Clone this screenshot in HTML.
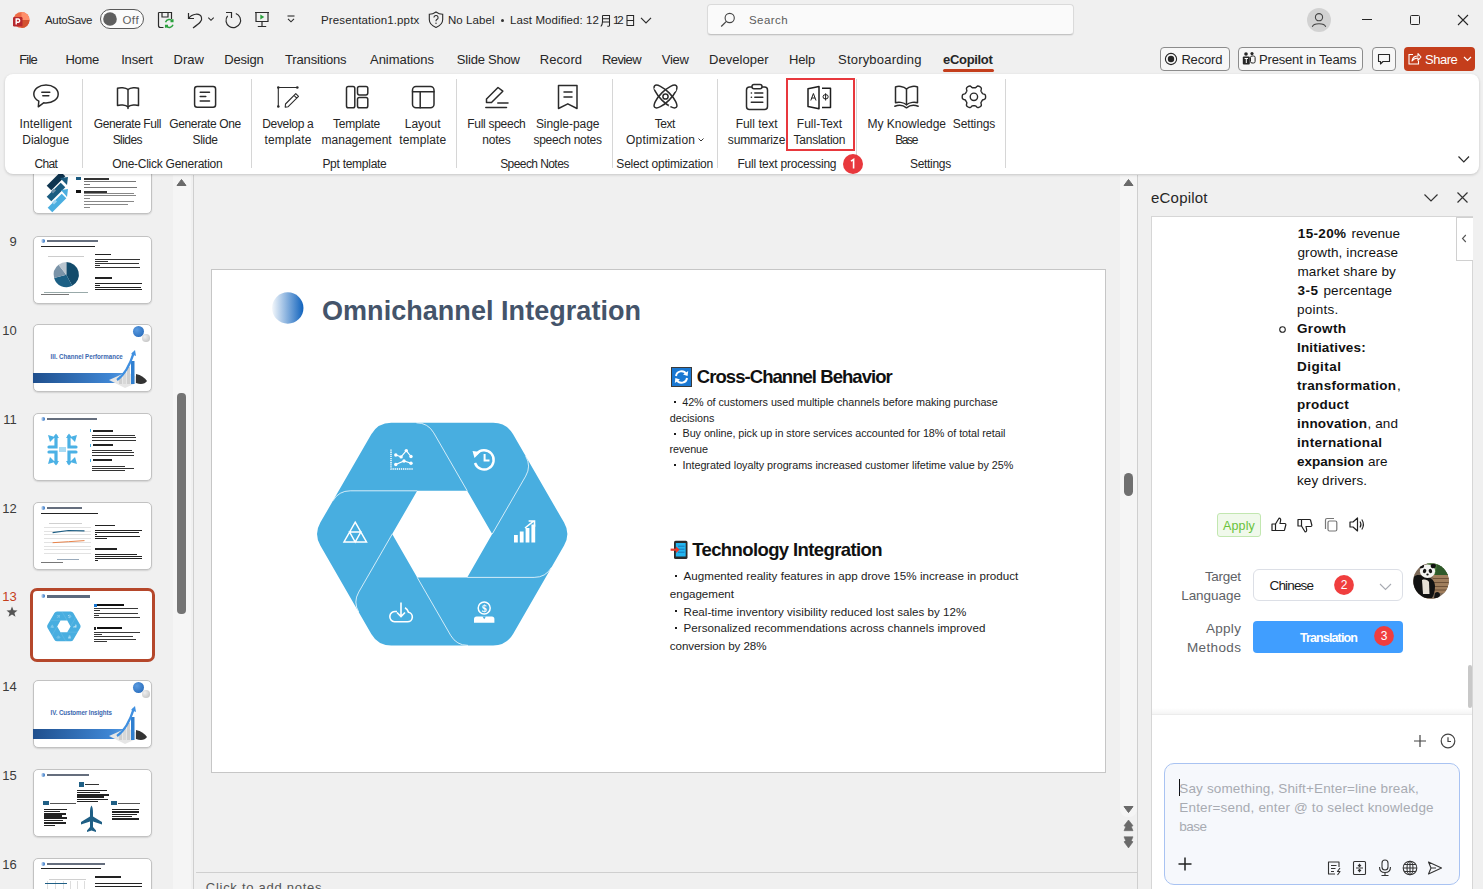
<!DOCTYPE html>
<html><head><meta charset="utf-8"><style>
html,body{margin:0;padding:0;}
body{width:1483px;height:889px;overflow:hidden;position:relative;background:#f0f0f0;font-family:"Liberation Sans",sans-serif;}
.t{position:absolute;white-space:pre;}
.r{position:absolute;}
.s{position:absolute;overflow:visible;}
</style></head><body>
<div class="r" style="left:173px;top:175px;width:18px;height:714px;background:#f5f5f5;"></div>
<div class="r" style="left:193px;top:175px;width:1px;height:714px;background:#cfcfcf;"></div>
<div class="r" style="left:1120px;top:175px;width:17px;height:642px;background:#f5f5f5;border-radius:0 0 8px 8px;"></div>
<div class="r" style="left:1137px;top:175px;width:1px;height:714px;background:#cfcfcf;"></div>
<div class="r" style="left:196px;top:872px;width:941px;height:1px;background:#cfcfcf;"></div>
<div class="r" style="left:211px;top:269px;width:895px;height:504px;background:#fff;border:1px solid #c6c6c6;box-sizing:border-box;"></div>
<div class="r" style="left:1151px;top:216px;width:322px;height:673px;background:#fff;border:1px solid #d6d6d6;box-sizing:border-box;border-bottom:none;"></div>
<div class="r" style="left:211px;top:269px;width:895px;height:504px;overflow:hidden;"><svg class="s" style="left:61px;top:23px;" width="32" height="32" viewBox="0 0 32 32"><defs><linearGradient id="gc" x1="0" x2="1" y1="0" y2="0"><stop offset="0" stop-color="#f3f7fb"/><stop offset="1" stop-color="#0f62bd"/></linearGradient></defs><circle cx="15.75" cy="16" r="15.7" fill="url(#gc)"/></svg>
<div class="t" style="left:111.00px;top:27.00px;font-size:27px;line-height:31.02px;color:#44546a;font-weight:bold;letter-spacing:0.044px;">Omnichannel Integration</div>
<svg class="s" style="left:0;top:0" width="895" height="504"><path d="M353.06 253.60 A23 23 0 0 1 353.06 276.60 L302.09 364.88 A23 23 0 0 1 282.17 376.38 L180.23 376.38 A23 23 0 0 1 160.31 364.88 L109.34 276.60 A23 23 0 0 1 109.34 253.60 L160.31 165.32 A23 23 0 0 1 180.23 153.82 L282.17 153.82 A23 23 0 0 1 302.09 165.32 Z M256.20 221.80 L206.20 221.80 L181.20 265.10 L206.20 308.40 L256.20 308.40 L281.20 265.10 Z" fill="#48aee0" fill-rule="evenodd"/><path d="M281.20 265.10 L314.68 207.12 A20 20 0 0 0 314.68 187.12 M256.20 308.40 L323.15 308.40 A20 20 0 0 0 340.47 298.40 M206.20 308.40 L239.68 366.38 A20 20 0 0 0 257.00 376.38 M181.20 265.10 L147.72 323.08 A20 20 0 0 0 147.72 343.08 M206.20 221.80 L139.25 221.80 A20 20 0 0 0 121.93 231.80 M256.20 221.80 L222.72 163.82 A20 20 0 0 0 205.40 153.82 " fill="none" stroke="#ffffff" stroke-opacity="0.85" stroke-width="0.9"/><g transform="translate(179.00,179.00)">
<path d="M1 1.5 V21 H22.7" fill="none" stroke="#ffffff" stroke-width="1.4" stroke-dasharray="1.3 0.8"/>
<polyline points="5.8,7 11.1,8.9 16.3,2.6 21,8.5" fill="none" stroke="#ffffff" stroke-width="1.2"/>
<polyline points="5.8,16.5 14,13 21,15.2" fill="none" stroke="#ffffff" stroke-width="1.2"/>
<circle cx="5.8" cy="7" r="1.7" fill="#ffffff"/><circle cx="11.1" cy="8.9" r="1.7" fill="#ffffff"/><circle cx="16.3" cy="2.6" r="1.7" fill="#ffffff"/><circle cx="21" cy="8.5" r="1.7" fill="#ffffff"/>
<circle cx="5.8" cy="16.5" r="1.7" fill="#ffffff"/><circle cx="14" cy="13" r="1.7" fill="#ffffff"/><circle cx="21" cy="15.2" r="1.7" fill="#ffffff"/>
</g><g transform="translate(261.00,179.00)">
<path d="M4.5 6 A9.6 9.6 0 1 1 3 15" fill="none" stroke="#ffffff" stroke-width="2.4"/>
<path d="M0.5 3 L8.5 4 L2.5 10 Z" fill="#ffffff"/>
<path d="M12.6 6 V12.5 H17.5" fill="none" stroke="#ffffff" stroke-width="2"/>
</g><g transform="translate(302.00,251.00)">
<rect x="1" y="15" width="3.8" height="7.5" fill="#ffffff"/>
<rect x="6.8" y="11.5" width="3.8" height="11" fill="#ffffff"/>
<rect x="12.6" y="8" width="3.8" height="14.5" fill="#ffffff"/>
<rect x="18.4" y="4.5" width="3.8" height="18" fill="#ffffff"/>
<path d="M12 8 L20.5 1.2 M15.6 1 H21.5 V6.8" fill="none" stroke="#ffffff" stroke-width="1.6"/>
</g><g transform="translate(262.00,332.00)">
<circle cx="11.2" cy="7" r="6" fill="none" stroke="#ffffff" stroke-width="1.5"/>
<text x="11.2" y="10.8" font-size="10" font-family="Liberation Serif" font-weight="bold" fill="#ffffff" text-anchor="middle">$</text>
<path d="M1 18 Q1 15.5 3.5 15.5 H18.9 Q21.4 15.5 21.4 18 V21.8 H1 Z" fill="#ffffff"/>
<path d="M9.5 15.5 L11.2 18.3 L12.9 15.5" fill="#48aee0"/>
</g><g transform="translate(178.00,332.00)">
<path d="M8 10.5 H6.5 A5 5 0 0 0 5.5 20.8 H18.5 A4.8 4.8 0 0 0 19.5 11.3 A7.5 7.5 0 0 0 16 6.8" fill="none" stroke="#ffffff" stroke-width="1.6"/>
<path d="M12 1.5 V15.5 M8 11.5 L12 15.5 L16 11.5" fill="none" stroke="#ffffff" stroke-width="1.6"/>
</g><g transform="translate(132.00,252.00)">
<path d="M12.2 1.2 L23.5 21 H1 Z M6.6 11.1 H17.8 L12.2 21 Z" fill="none" stroke="#ffffff" stroke-width="1.5" stroke-linejoin="miter"/>
</g></svg>
<svg class="s" style="left:460px;top:98px;" width="21" height="20" viewBox="0 0 21 20">
<rect x="0.5" y="0.5" width="20" height="19" fill="#1a78d2" stroke="#3a3a3a" stroke-width="1"/>
<path d="M5 9 A5.5 5.5 0 0 1 15.2 7" fill="none" stroke="#fff" stroke-width="2"/>
<path d="M16.5 3.5 V8.3 H11.8" fill="none" stroke="#fff" stroke-width="0"/>
<path d="M17.2 4 L16.6 9 L12 7.4 Z" fill="#fff"/>
<path d="M16 11 A5.5 5.5 0 0 1 5.8 13" fill="none" stroke="#fff" stroke-width="2"/>
<path d="M3.8 16 L4.4 11 L9 12.6 Z" fill="#fff"/>
</svg>
<div class="t" style="left:485.80px;top:97.00px;font-size:18.5px;line-height:21.26px;color:#111111;font-weight:bold;letter-spacing:-0.947px;">Cross-Channel Behavior</div>
<div class="r" style="left:463px;top:131.8px;width:2px;height:2px;background:#1c1c1c;"></div>
<div class="t" style="left:471.20px;top:127.00px;font-size:10.8px;line-height:12.41px;color:#1c1c1c;letter-spacing:-0.042px;">42% of customers used multiple channels before making purchase</div>
<div class="t" style="left:458.80px;top:143.00px;font-size:10.8px;line-height:12.41px;color:#1c1c1c;letter-spacing:-0.066px;">decisions</div>
<div class="r" style="left:463px;top:163.5px;width:2px;height:2px;background:#1c1c1c;"></div>
<div class="t" style="left:471.50px;top:158.00px;font-size:10.8px;line-height:12.41px;color:#1c1c1c;letter-spacing:-0.051px;">Buy online, pick up in store services accounted for 18% of total retail</div>
<div class="t" style="left:458.60px;top:174.00px;font-size:10.8px;line-height:12.41px;color:#1c1c1c;letter-spacing:-0.105px;">revenue</div>
<div class="r" style="left:463px;top:195.3px;width:2px;height:2px;background:#1c1c1c;"></div>
<div class="t" style="left:471.50px;top:190.00px;font-size:10.8px;line-height:12.41px;color:#1c1c1c;letter-spacing:-0.032px;">Integrated loyalty programs increased customer lifetime value by 25%</div>
<svg class="s" style="left:459px;top:271px;" width="19" height="20" viewBox="0 0 19 20">
<rect x="4" y="0.8" width="13.5" height="18.2" rx="1.6" fill="#2a2a2a"/>
<rect x="5.8" y="3" width="9.9" height="13.5" fill="#22b5f0"/>
<path d="M8 6.2 H14.5 M8 9.2 H14.5 M8 12.2 H14.5" stroke="#1565a8" stroke-width="0.8"/>
<path d="M0.6 9.7 H7" stroke="#e53b2c" stroke-width="2.2"/>
<path d="M6 6.5 L9.6 9.7 L6 12.9 Z" fill="#e53b2c"/>
</svg>
<div class="t" style="left:481.20px;top:270.00px;font-size:18.5px;line-height:21.26px;color:#111111;font-weight:bold;letter-spacing:-0.607px;">Technology Integration</div>
<div class="r" style="left:463.5px;top:306.0px;width:2.2px;height:2.2px;background:#1c1c1c;"></div>
<div class="t" style="left:472.50px;top:300.00px;font-size:11.6px;line-height:13.33px;color:#1c1c1c;letter-spacing:0.026px;">Augmented reality features in app drove 15% increase in product</div>
<div class="t" style="left:458.80px;top:318.00px;font-size:11.6px;line-height:13.33px;color:#1c1c1c;letter-spacing:-0.033px;">engagement</div>
<div class="r" style="left:463.5px;top:341.0px;width:2.2px;height:2.2px;background:#1c1c1c;"></div>
<div class="t" style="left:472.50px;top:336.00px;font-size:11.6px;line-height:13.33px;color:#1c1c1c;letter-spacing:0.023px;">Real-time inventory visibility reduced lost sales by 12%</div>
<div class="r" style="left:463.5px;top:358.0px;width:2.2px;height:2.2px;background:#1c1c1c;"></div>
<div class="t" style="left:472.50px;top:352.00px;font-size:11.6px;line-height:13.33px;color:#1c1c1c;letter-spacing:0.030px;">Personalized recommendations across channels improved</div>
<div class="t" style="left:458.80px;top:370.00px;font-size:11.6px;line-height:13.33px;color:#1c1c1c;letter-spacing:-0.082px;">conversion by 28%</div></div>
<div class="r" style="left:32.5px;top:146px;width:119px;height:68px;box-sizing:border-box;border:1px solid #c2c2c2;border-radius:5px;background:#fff;box-shadow:0 1px 1.5px rgba(0,0,0,0.12);"></div><div class="r" style="left:32.5px;top:146px;width:119px;height:68px;overflow:hidden;border-radius:5px;"><svg class="s" style="left:13.5px;top:20px;" width="26" height="46" viewBox="0 0 26 46">
<path d="M3 22 L17 8" stroke="#0f3550" stroke-width="6.5"/>
<path d="M3 33 L17 19" stroke="#1b5c80" stroke-width="6.5"/>
<path d="M14 12 L22 11 L21 19 Z" fill="#1b5c80"/>
<path d="M4 44 L18 30" stroke="#4aaee0" stroke-width="6.5"/>
<path d="M15 24 L22 23 L21 31 Z" fill="#4aaee0"/>
<path d="M5 25.5 L8 22.5 L10 24.5 L7 27.5 Z" fill="#6d8ea6"/>
<path d="M6 36.5 L9 33.5 L11 35.5 L8 38.5 Z" fill="#9fd3ef"/>
</svg><div class="r" style="left:43.5px;top:31px;width:5px;height:3px;background:#1a5a80;"></div><div class="r" style="left:51.5px;top:31.6px;width:25.0px;height:2px;background:#333;opacity:1;"></div><div class="r" style="left:51.5px;top:35.4px;width:52.0px;height:0.9px;background:#777;opacity:1;"></div><div class="r" style="left:51.5px;top:38.0px;width:6.0px;height:0.9px;background:#777;opacity:1;"></div><div class="r" style="left:51.5px;top:40.7px;width:53.0px;height:0.9px;background:#777;opacity:1;"></div><div class="r" style="left:43.5px;top:44px;width:5px;height:3.2px;background:#111;"></div><div class="r" style="left:51.5px;top:44.5px;width:23.0px;height:2px;background:#333;opacity:1;"></div><div class="r" style="left:51.5px;top:47.0px;width:50.0px;height:0.9px;background:#888;opacity:1;"></div><div class="r" style="left:51.5px;top:49.4px;width:52.0px;height:0.9px;background:#888;opacity:1;"></div><div class="r" style="left:51.5px;top:52.0px;width:6.0px;height:0.9px;background:#888;opacity:1;"></div><div class="r" style="left:51.5px;top:54.9px;width:50.0px;height:0.9px;background:#888;opacity:1;"></div><div class="r" style="left:51.5px;top:57.9px;width:44.0px;height:0.9px;background:#888;opacity:1;"></div><div class="r" style="left:51.5px;top:60.7px;width:6.0px;height:0.9px;background:#888;opacity:1;"></div></div>
<div class="t" style="left:9.57px;top:145.00px;font-size:13px;line-height:14.94px;color:#3b3b3b;">8</div>
<div class="r" style="left:32.5px;top:235.5px;width:119px;height:68px;box-sizing:border-box;border:1px solid #c2c2c2;border-radius:5px;background:#fff;box-shadow:0 1px 1.5px rgba(0,0,0,0.12);"></div><div class="r" style="left:32.5px;top:235.5px;width:119px;height:68px;overflow:hidden;border-radius:5px;"><div class="r" style="left:8.5px;top:3.5px;width:4.2px;height:4.2px;border-radius:50%;background:linear-gradient(90deg,#e6eef7,#1a66c0);"></div><div class="r" style="left:14.8px;top:4.2px;width:50.7px;height:2.6px;background:#4a5566;opacity:0.85;"></div><div class="r" style="left:8.0px;top:10.6px;width:54.5px;height:1px;background:#222;opacity:1;"></div><div class="r" style="left:15.5px;top:20.6px;width:35.5px;height:1px;background:#ccc;opacity:1;"></div><svg class="s" style="left:0;top:0" width="119" height="68"><path d="M33.30 38.70 L33.30 26.10 A12.6 12.6 0 0 1 39.22 49.83 Z" fill="#134b6b"/><path d="M33.30 38.70 L39.22 49.83 A12.6 12.6 0 0 1 21.13 41.96 Z" fill="#1b5f84"/><path d="M33.30 38.70 L21.13 41.96 A12.6 12.6 0 0 1 25.54 28.77 Z" fill="#7a93a8"/><path d="M33.30 38.70 L25.54 28.77 A12.6 12.6 0 0 1 33.30 26.10 Z" fill="#b9c5cf"/></svg><div class="r" style="left:11.5px;top:56.1px;width:44.0px;height:0.8px;background:#9aa;opacity:1;"></div><div class="r" style="left:8.0px;top:58.8px;width:28.3px;height:1.1px;background:#777;opacity:1;"></div><div class="r" style="left:62.5px;top:18.2px;width:15.5px;height:1.8px;background:#222;opacity:1;"></div><div class="r" style="left:62.8px;top:23.1px;width:45.2px;height:1px;background:#333;opacity:1;"></div><div class="r" style="left:62.8px;top:25.1px;width:12.7px;height:1px;background:#333;opacity:1;"></div><div class="r" style="left:62.8px;top:27.2px;width:43.7px;height:1px;background:#333;opacity:1;"></div><div class="r" style="left:62.8px;top:29.0px;width:4.7px;height:1px;background:#333;opacity:1;"></div><div class="r" style="left:62.8px;top:31.0px;width:45.2px;height:1px;background:#333;opacity:1;"></div><div class="r" style="left:62.5px;top:41.6px;width:17.0px;height:1.8px;background:#222;opacity:1;"></div><div class="r" style="left:62.8px;top:47.3px;width:46.7px;height:1.1px;background:#222;opacity:1;"></div><div class="r" style="left:62.8px;top:49.1px;width:4.7px;height:1.1px;background:#222;opacity:1;"></div><div class="r" style="left:62.8px;top:51.1px;width:45.7px;height:1.1px;background:#222;opacity:1;"></div><div class="r" style="left:62.8px;top:53.3px;width:46.7px;height:1.1px;background:#222;opacity:1;"></div></div>
<div class="t" style="left:9.57px;top:235.00px;font-size:13px;line-height:14.94px;color:#3b3b3b;">9</div>
<div class="r" style="left:32.5px;top:324.3px;width:119px;height:68px;box-sizing:border-box;border:1px solid #c2c2c2;border-radius:5px;background:#fff;box-shadow:0 1px 1.5px rgba(0,0,0,0.12);"></div><div class="r" style="left:32.5px;top:324.3px;width:119px;height:68px;overflow:hidden;border-radius:5px;"><div class="r" style="left:100.3px;top:1.7px;width:11px;height:11px;border-radius:50%;background:radial-gradient(circle at 35% 35%,#5a9be0,#1f63b5);"></div><div class="r" style="left:109.9px;top:9.7px;width:7.6px;height:7.6px;border-radius:50%;background:radial-gradient(circle at 35% 35%,#eee,#bbb);"></div><div class="t" style="left:18.10px;top:28.49px;font-size:6.2px;line-height:7.12px;color:#3a68b0;font-weight:bold;letter-spacing:-0.017px;transform:scaleY(1.25);transform-origin:0 80%;">III. Channel Performance</div><div class="r" style="left:0.0px;top:49.1px;width:97px;height:9.2px;background:linear-gradient(90deg,#1f4f8d,#3f86d4 80%,#5aa0e6);"></div><svg class="s" style="left:70.5px;top:25.69999999999999px;" width="45" height="42" viewBox="0 0 45 42">
<path d="M6 30 L22 38 L40 30 L24 22 Z" fill="#e6e6e6"/>
<rect x="16" y="26" width="3" height="8" fill="#cfcfcf"/><rect x="20" y="22" width="3" height="12" fill="#d8d8d8"/><rect x="24" y="17" width="3" height="17" fill="#cfcfcf"/>
<rect x="28" y="11" width="3.5" height="23" fill="#2f7fd0"/>
<path d="M14 30 C20 26 26 18 31 2" fill="none" stroke="#3f8fe0" stroke-width="2.3"/>
<path d="M28 4 L32 0 L33 6 Z" fill="#3f8fe0"/>
<path d="M33 24 C38 25 42 28 44 31 C42 34 38 35 33 33 Z" fill="#333"/>
</svg></div>
<div class="t" style="left:2.34px;top:324.00px;font-size:13px;line-height:14.94px;color:#3b3b3b;">10</div>
<div class="r" style="left:32.5px;top:413.3px;width:119px;height:68px;box-sizing:border-box;border:1px solid #c2c2c2;border-radius:5px;background:#fff;box-shadow:0 1px 1.5px rgba(0,0,0,0.12);"></div><div class="r" style="left:32.5px;top:413.3px;width:119px;height:68px;overflow:hidden;border-radius:5px;"><div class="r" style="left:8.5px;top:3.7px;width:4.2px;height:4.2px;border-radius:50%;background:linear-gradient(90deg,#e6eef7,#1a66c0);"></div><div class="r" style="left:14.8px;top:4.4px;width:49.3px;height:2.6px;background:#4a5566;opacity:0.85;"></div><svg class="s" style="left:13.5px;top:19.69999999999999px;" width="33" height="33" viewBox="0 0 33 33">
<g fill="none" stroke="#4bb1e5" stroke-width="3.2" stroke-linecap="round">
<path d="M10 3 V14 H3 M23 3 V14 H30 M10 30 V19 H3 M23 30 V19 H30"/>
</g>
<g fill="#4bb1e5">
<path d="M2 2 L9 4 L4 9 Z"/><path d="M31 2 L24 4 L29 9 Z"/><path d="M2 31 L9 29 L4 24 Z"/><path d="M31 31 L24 29 L29 24 Z"/>
<path d="M10 0.5 L13 5 H7 Z"/><path d="M23 0.5 L26 5 H20 Z"/><path d="M10 32.5 L13 28 H7 Z"/><path d="M23 32.5 L26 28 H20 Z"/>
</g>
<rect x="13" y="14" width="7" height="5" fill="#a9dbf3"/>
</svg><div class="r" style="left:57.5px;top:15.9px;width:0.8px;height:3px;background:#4bb1e5;opacity:1;"></div><div class="r" style="left:60.5px;top:16.5px;width:20.0px;height:1.8px;background:#222;opacity:1;"></div><div class="r" style="left:59.5px;top:21.5px;width:43.0px;height:1px;background:#333;opacity:1;"></div><div class="r" style="left:59.5px;top:23.6px;width:44.0px;height:1px;background:#333;opacity:1;"></div><div class="r" style="left:59.5px;top:26.6px;width:44.0px;height:1px;background:#333;opacity:1;"></div><div class="r" style="left:57.5px;top:30.6px;width:0.8px;height:3px;background:#4bb1e5;opacity:1;"></div><div class="r" style="left:60.5px;top:31.2px;width:20.0px;height:1.8px;background:#222;opacity:1;"></div><div class="r" style="left:59.5px;top:36.5px;width:40.0px;height:1px;background:#333;opacity:1;"></div><div class="r" style="left:59.5px;top:39.2px;width:42.0px;height:1px;background:#333;opacity:1;"></div><div class="r" style="left:59.5px;top:41.7px;width:42.0px;height:1px;background:#333;opacity:1;"></div><div class="r" style="left:57.5px;top:45.6px;width:0.8px;height:3px;background:#4bb1e5;opacity:1;"></div><div class="r" style="left:60.5px;top:46.2px;width:19.0px;height:1.8px;background:#222;opacity:1;"></div><div class="r" style="left:59.5px;top:52.5px;width:33.0px;height:1px;background:#333;opacity:1;"></div><div class="r" style="left:59.5px;top:54.5px;width:42.0px;height:1px;background:#333;opacity:1;"></div><div class="r" style="left:59.5px;top:56.6px;width:33.0px;height:1px;background:#333;opacity:1;"></div></div>
<div class="t" style="left:3.30px;top:413.00px;font-size:13px;line-height:14.94px;color:#3b3b3b;">11</div>
<div class="r" style="left:32.5px;top:502px;width:119px;height:68px;box-sizing:border-box;border:1px solid #c2c2c2;border-radius:5px;background:#fff;box-shadow:0 1px 1.5px rgba(0,0,0,0.12);"></div><div class="r" style="left:32.5px;top:502px;width:119px;height:68px;overflow:hidden;border-radius:5px;"><div class="r" style="left:8.5px;top:4.0px;width:4.2px;height:4.2px;border-radius:50%;background:linear-gradient(90deg,#e6eef7,#1a66c0);"></div><div class="r" style="left:14.8px;top:4.7px;width:35.0px;height:2.6px;background:#4a5566;opacity:0.85;"></div><div class="r" style="left:8.0px;top:10.7px;width:57.8px;height:1px;background:#222;opacity:1;"></div><div class="r" style="left:16.9px;top:20.8px;width:32.5px;height:1px;background:#d0d0d0;opacity:1;"></div><div class="r" style="left:11.8px;top:24.9px;width:46.4px;height:0.7px;background:#e2e2e2;opacity:1;"></div><div class="r" style="left:11.8px;top:28.8px;width:46.4px;height:0.7px;background:#e2e2e2;opacity:1;"></div><div class="r" style="left:11.8px;top:32.4px;width:46.4px;height:0.7px;background:#e2e2e2;opacity:1;"></div><div class="r" style="left:11.8px;top:36.1px;width:46.4px;height:0.7px;background:#e2e2e2;opacity:1;"></div><div class="r" style="left:11.8px;top:39.9px;width:46.4px;height:0.7px;background:#e2e2e2;opacity:1;"></div><div class="r" style="left:11.8px;top:43.6px;width:46.4px;height:0.7px;background:#e2e2e2;opacity:1;"></div><div class="r" style="left:11.8px;top:47.4px;width:46.4px;height:0.7px;background:#e2e2e2;opacity:1;"></div><div class="r" style="left:11.8px;top:51.0px;width:46.4px;height:0.7px;background:#e2e2e2;opacity:1;"></div><svg class="s" style="left:0;top:0" width="119" height="68"><polyline points="19.6,30.600000000000023 35.400000000000006,28.5 51.5,28.899999999999977" fill="none" stroke="#1f5f85" stroke-width="1.2"/><polyline points="19.6,40.700000000000045 35.400000000000006,39.700000000000045 51.5,38.60000000000002" fill="none" stroke="#e8834a" stroke-width="1"/></svg><div class="r" style="left:24.5px;top:56.7px;width:22.0px;height:0.8px;background:#9ab;opacity:1;"></div><div class="r" style="left:8.0px;top:59.5px;width:22.4px;height:1px;background:#777;opacity:1;"></div><div class="r" style="left:62.8px;top:22.5px;width:19.4px;height:1.8px;background:#222;opacity:1;"></div><div class="r" style="left:62.8px;top:27.7px;width:46.7px;height:1px;background:#222;opacity:1;"></div><div class="r" style="left:62.8px;top:29.5px;width:43.7px;height:1px;background:#222;opacity:1;"></div><div class="r" style="left:62.8px;top:31.5px;width:1.7px;height:1px;background:#222;opacity:1;"></div><div class="r" style="left:62.8px;top:33.6px;width:44.7px;height:1px;background:#222;opacity:1;"></div><div class="r" style="left:62.8px;top:35.8px;width:11.7px;height:1px;background:#222;opacity:1;"></div><div class="r" style="left:62.8px;top:45.9px;width:21.7px;height:1.8px;background:#222;opacity:1;"></div><div class="r" style="left:62.8px;top:51.7px;width:41.7px;height:1.1px;background:#222;opacity:1;"></div><div class="r" style="left:62.8px;top:53.8px;width:46.7px;height:1.1px;background:#222;opacity:1;"></div><div class="r" style="left:62.8px;top:55.7px;width:46.7px;height:1.1px;background:#222;opacity:1;"></div><div class="r" style="left:62.8px;top:57.7px;width:2.7px;height:1.1px;background:#222;opacity:1;"></div></div>
<div class="t" style="left:2.34px;top:502.00px;font-size:13px;line-height:14.94px;color:#3b3b3b;">12</div>
<div class="r" style="left:29.5px;top:588px;width:125px;height:74px;box-sizing:border-box;border:3px solid #b5472b;border-radius:7px;background:#fff;"></div><div class="r" style="left:32.5px;top:591px;width:119px;height:68px;overflow:hidden;border-radius:4px;"><div class="r" style="left:0;top:0;width:895px;height:504px;transform-origin:0 0;transform:scale(0.13352);"><svg class="s" style="left:0;top:0" width="895" height="504"><path d="M353.06 253.60 A23 23 0 0 1 353.06 276.60 L302.09 364.88 A23 23 0 0 1 282.17 376.38 L180.23 376.38 A23 23 0 0 1 160.31 364.88 L109.34 276.60 A23 23 0 0 1 109.34 253.60 L160.31 165.32 A23 23 0 0 1 180.23 153.82 L282.17 153.82 A23 23 0 0 1 302.09 165.32 Z M256.20 221.80 L206.20 221.80 L181.20 265.10 L206.20 308.40 L256.20 308.40 L281.20 265.10 Z" fill="#48aee0" fill-rule="evenodd"/><path d="M281.20 265.10 L314.68 207.12 A20 20 0 0 0 314.68 187.12 M256.20 308.40 L323.15 308.40 A20 20 0 0 0 340.47 298.40 M206.20 308.40 L239.68 366.38 A20 20 0 0 0 257.00 376.38 M181.20 265.10 L147.72 323.08 A20 20 0 0 0 147.72 343.08 M206.20 221.80 L139.25 221.80 A20 20 0 0 0 121.93 231.80 M256.20 221.80 L222.72 163.82 A20 20 0 0 0 205.40 153.82 " fill="none" stroke="#ffffff" stroke-opacity="0.85" stroke-width="0.9"/><g transform="translate(179.00,179.00)">
<path d="M1 1.5 V21 H22.7" fill="none" stroke="#ffffff" stroke-width="1.4" stroke-dasharray="1.3 0.8"/>
<polyline points="5.8,7 11.1,8.9 16.3,2.6 21,8.5" fill="none" stroke="#ffffff" stroke-width="1.2"/>
<polyline points="5.8,16.5 14,13 21,15.2" fill="none" stroke="#ffffff" stroke-width="1.2"/>
<circle cx="5.8" cy="7" r="1.7" fill="#ffffff"/><circle cx="11.1" cy="8.9" r="1.7" fill="#ffffff"/><circle cx="16.3" cy="2.6" r="1.7" fill="#ffffff"/><circle cx="21" cy="8.5" r="1.7" fill="#ffffff"/>
<circle cx="5.8" cy="16.5" r="1.7" fill="#ffffff"/><circle cx="14" cy="13" r="1.7" fill="#ffffff"/><circle cx="21" cy="15.2" r="1.7" fill="#ffffff"/>
</g><g transform="translate(261.00,179.00)">
<path d="M4.5 6 A9.6 9.6 0 1 1 3 15" fill="none" stroke="#ffffff" stroke-width="2.4"/>
<path d="M0.5 3 L8.5 4 L2.5 10 Z" fill="#ffffff"/>
<path d="M12.6 6 V12.5 H17.5" fill="none" stroke="#ffffff" stroke-width="2"/>
</g><g transform="translate(302.00,251.00)">
<rect x="1" y="15" width="3.8" height="7.5" fill="#ffffff"/>
<rect x="6.8" y="11.5" width="3.8" height="11" fill="#ffffff"/>
<rect x="12.6" y="8" width="3.8" height="14.5" fill="#ffffff"/>
<rect x="18.4" y="4.5" width="3.8" height="18" fill="#ffffff"/>
<path d="M12 8 L20.5 1.2 M15.6 1 H21.5 V6.8" fill="none" stroke="#ffffff" stroke-width="1.6"/>
</g><g transform="translate(262.00,332.00)">
<circle cx="11.2" cy="7" r="6" fill="none" stroke="#ffffff" stroke-width="1.5"/>
<text x="11.2" y="10.8" font-size="10" font-family="Liberation Serif" font-weight="bold" fill="#ffffff" text-anchor="middle">$</text>
<path d="M1 18 Q1 15.5 3.5 15.5 H18.9 Q21.4 15.5 21.4 18 V21.8 H1 Z" fill="#ffffff"/>
<path d="M9.5 15.5 L11.2 18.3 L12.9 15.5" fill="#48aee0"/>
</g><g transform="translate(178.00,332.00)">
<path d="M8 10.5 H6.5 A5 5 0 0 0 5.5 20.8 H18.5 A4.8 4.8 0 0 0 19.5 11.3 A7.5 7.5 0 0 0 16 6.8" fill="none" stroke="#ffffff" stroke-width="1.6"/>
<path d="M12 1.5 V15.5 M8 11.5 L12 15.5 L16 11.5" fill="none" stroke="#ffffff" stroke-width="1.6"/>
</g><g transform="translate(132.00,252.00)">
<path d="M12.2 1.2 L23.5 21 H1 Z M6.6 11.1 H17.8 L12.2 21 Z" fill="none" stroke="#ffffff" stroke-width="1.5" stroke-linejoin="miter"/>
</g></svg></div><div class="r" style="left:8.14px;top:3.07px;width:4.2px;height:4.2px;border-radius:50%;background:linear-gradient(90deg,#e6eef7,#1a66c0);"></div><div class="r" style="left:14.8px;top:4.4px;width:42.6px;height:2.4px;background:#4a5a70;opacity:0.9;"></div><div class="r" style="left:61.42px;top:13.08px;width:2.8px;height:2.6px;background:#1a78d2;"></div><div class="r" style="left:64.9px;top:13.3px;width:26.2px;height:1.9px;background:#111;opacity:1;"></div><div class="r" style="left:61.3px;top:17.3px;width:43.8px;height:0.9px;background:#222;opacity:0.9;"></div><div class="r" style="left:61.3px;top:19.4px;width:5.9px;height:0.9px;background:#222;opacity:0.9;"></div><div class="r" style="left:61.3px;top:21.5px;width:44.7px;height:0.9px;background:#222;opacity:0.9;"></div><div class="r" style="left:61.3px;top:23.7px;width:5.1px;height:0.9px;background:#222;opacity:0.9;"></div><div class="r" style="left:61.3px;top:25.8px;width:45.8px;height:0.9px;background:#222;opacity:0.9;"></div><div class="r" style="left:61.42px;top:36.18px;width:2.2px;height:2.6px;background:#222;"></div><div class="r" style="left:64.2px;top:36.4px;width:25.4px;height:1.9px;background:#111;opacity:1;"></div><div class="r" style="left:61.3px;top:40.6px;width:46.5px;height:0.9px;background:#222;opacity:0.9;"></div><div class="r" style="left:61.3px;top:43.0px;width:8.5px;height:0.9px;background:#222;opacity:0.9;"></div><div class="r" style="left:61.3px;top:45.3px;width:39.5px;height:0.9px;background:#222;opacity:0.9;"></div><div class="r" style="left:61.3px;top:47.6px;width:42.1px;height:0.9px;background:#222;opacity:0.9;"></div><div class="r" style="left:61.3px;top:50.0px;width:12.8px;height:0.9px;background:#222;opacity:0.9;"></div></div>
<div class="t" style="left:2.34px;top:590.00px;font-size:13px;line-height:14.94px;color:#c43e1c;">13</div>
<svg class="s" style="left:6px;top:606px;" width="12" height="11" viewBox="0 0 12 11"><path d="M6 0.5 L7.5 4.3 L11.5 4.5 L8.4 7 L9.5 10.8 L6 8.6 L2.5 10.8 L3.6 7 L0.5 4.5 L4.5 4.3 Z" fill="#555"/></svg>
<div class="r" style="left:32.5px;top:680.3px;width:119px;height:68px;box-sizing:border-box;border:1px solid #c2c2c2;border-radius:5px;background:#fff;box-shadow:0 1px 1.5px rgba(0,0,0,0.12);"></div><div class="r" style="left:32.5px;top:680.3px;width:119px;height:68px;overflow:hidden;border-radius:5px;"><div class="r" style="left:100.3px;top:1.7px;width:11px;height:11px;border-radius:50%;background:radial-gradient(circle at 35% 35%,#5a9be0,#1f63b5);"></div><div class="r" style="left:109.9px;top:9.7px;width:7.6px;height:7.6px;border-radius:50%;background:radial-gradient(circle at 35% 35%,#eee,#bbb);"></div><div class="t" style="left:18.10px;top:28.49px;font-size:6.2px;line-height:7.12px;color:#3a68b0;font-weight:bold;letter-spacing:-0.088px;transform:scaleY(1.25);transform-origin:0 80%;">IV. Customer Insights</div><div class="r" style="left:0.0px;top:49.1px;width:97px;height:9.2px;background:linear-gradient(90deg,#1f4f8d,#3f86d4 80%,#5aa0e6);"></div><svg class="s" style="left:70.5px;top:25.69999999999999px;" width="45" height="42" viewBox="0 0 45 42">
<path d="M6 30 L22 38 L40 30 L24 22 Z" fill="#e6e6e6"/>
<rect x="16" y="26" width="3" height="8" fill="#cfcfcf"/><rect x="20" y="22" width="3" height="12" fill="#d8d8d8"/><rect x="24" y="17" width="3" height="17" fill="#cfcfcf"/>
<rect x="28" y="11" width="3.5" height="23" fill="#2f7fd0"/>
<path d="M14 30 C20 26 26 18 31 2" fill="none" stroke="#3f8fe0" stroke-width="2.3"/>
<path d="M28 4 L32 0 L33 6 Z" fill="#3f8fe0"/>
<path d="M33 24 C38 25 42 28 44 31 C42 34 38 35 33 33 Z" fill="#333"/>
</svg></div>
<div class="t" style="left:2.34px;top:680.00px;font-size:13px;line-height:14.94px;color:#3b3b3b;">14</div>
<div class="r" style="left:32.5px;top:769.3px;width:119px;height:68px;box-sizing:border-box;border:1px solid #c2c2c2;border-radius:5px;background:#fff;box-shadow:0 1px 1.5px rgba(0,0,0,0.12);"></div><div class="r" style="left:32.5px;top:769.3px;width:119px;height:68px;overflow:hidden;border-radius:5px;"><div class="r" style="left:8.5px;top:3.7px;width:4.2px;height:4.2px;border-radius:50%;background:linear-gradient(90deg,#e6eef7,#1a66c0);"></div><div class="r" style="left:14.8px;top:4.4px;width:41.3px;height:2.6px;background:#4a5566;opacity:0.85;"></div><div class="r" style="left:46.3px;top:12.7px;width:5.6px;height:4.6px;background:#1f5f85;"></div><div class="r" style="left:52.5px;top:14.4px;width:14.0px;height:1.2px;background:#333;opacity:1;"></div><div class="r" style="left:44.9px;top:20.7px;width:29.6px;height:1.1px;background:#222;opacity:1;"></div><div class="r" style="left:44.9px;top:22.7px;width:22.6px;height:1.1px;background:#222;opacity:1;"></div><div class="r" style="left:44.9px;top:25.2px;width:32.1px;height:1.1px;background:#222;opacity:1;"></div><div class="r" style="left:44.9px;top:27.2px;width:26.6px;height:1.1px;background:#222;opacity:1;"></div><div class="r" style="left:44.9px;top:29.7px;width:30.6px;height:1.1px;background:#222;opacity:1;"></div><div class="r" style="left:44.9px;top:31.7px;width:20.6px;height:1.1px;background:#222;opacity:1;"></div><div class="r" style="left:10.3px;top:31.7px;width:6px;height:4.5px;background:#1f5f85;"></div><div class="r" style="left:17.5px;top:33.4px;width:26.0px;height:1px;background:#555;opacity:1;"></div><div class="r" style="left:78.5px;top:31.7px;width:6px;height:4.5px;background:#1f5f85;"></div><div class="r" style="left:85.5px;top:33.4px;width:22.0px;height:1px;background:#555;opacity:1;"></div><div class="r" style="left:11.5px;top:40.0px;width:23.0px;height:1.1px;background:#222;opacity:1;"></div><div class="r" style="left:11.5px;top:42.0px;width:16.0px;height:1.1px;background:#222;opacity:1;"></div><div class="r" style="left:11.5px;top:44.2px;width:22.0px;height:1.1px;background:#222;opacity:1;"></div><div class="r" style="left:11.5px;top:46.2px;width:18.0px;height:1.1px;background:#222;opacity:1;"></div><div class="r" style="left:11.5px;top:48.2px;width:23.0px;height:1.1px;background:#222;opacity:1;"></div><div class="r" style="left:11.5px;top:50.7px;width:19.0px;height:1.1px;background:#222;opacity:1;"></div><div class="r" style="left:11.5px;top:53.2px;width:22.0px;height:1.1px;background:#222;opacity:1;"></div><div class="r" style="left:11.5px;top:55.5px;width:11.0px;height:1.1px;background:#222;opacity:1;"></div><div class="r" style="left:79.8px;top:40.0px;width:26.7px;height:1.1px;background:#222;opacity:1;"></div><div class="r" style="left:79.8px;top:42.2px;width:26.7px;height:1.1px;background:#222;opacity:1;"></div><div class="r" style="left:79.8px;top:44.5px;width:24.7px;height:1.1px;background:#222;opacity:1;"></div><div class="r" style="left:79.8px;top:46.7px;width:19.7px;height:1.1px;background:#222;opacity:1;"></div><div class="r" style="left:79.8px;top:49.2px;width:26.7px;height:1.1px;background:#222;opacity:1;"></div><svg class="s" style="left:47.5px;top:35.700000000000045px;" width="23" height="28" viewBox="0 0 23 28">
<path d="M11.5 0.5 C12.8 2 13 5 13 8 V11.5 L22 17 V19.5 L13 16.5 V22 L16 25.5 V27 L11.5 25.5 L7 27 V25.5 L10 22 V16.5 L1 19.5 V17 L10 11.5 V8 C10 5 10.2 2 11.5 0.5 Z" fill="#1f5f85"/>
</svg></div>
<div class="t" style="left:2.34px;top:769.00px;font-size:13px;line-height:14.94px;color:#3b3b3b;">15</div>
<div class="r" style="left:32.5px;top:858.3px;width:119px;height:68px;box-sizing:border-box;border:1px solid #c2c2c2;border-radius:5px;background:#fff;box-shadow:0 1px 1.5px rgba(0,0,0,0.12);"></div><div class="r" style="left:32.5px;top:858.3px;width:119px;height:68px;overflow:hidden;border-radius:5px;"><div class="r" style="left:8.5px;top:3.7px;width:4.2px;height:4.2px;border-radius:50%;background:linear-gradient(90deg,#e6eef7,#1a66c0);"></div><div class="r" style="left:14.8px;top:4.4px;width:57.7px;height:2.6px;background:#4a5566;opacity:0.85;"></div><div class="r" style="left:8.0px;top:10.1px;width:60.5px;height:1px;background:#222;opacity:1;"></div><div class="r" style="left:16.5px;top:20.6px;width:37.0px;height:1px;background:#d0d0d0;opacity:1;"></div><div class="r" style="left:62.4px;top:18.1px;width:25.8px;height:1.8px;background:#222;opacity:1;"></div><div class="r" style="left:62.8px;top:24.4px;width:46.7px;height:1.1px;background:#222;opacity:1;"></div><div class="r" style="left:62.8px;top:27.4px;width:46.7px;height:1.1px;background:#222;opacity:1;"></div><div class="r" style="left:14.5px;top:22.700000000000045px;width:0.7px;height:10px;background:#ddd;"></div><div class="r" style="left:22.5px;top:22.700000000000045px;width:0.7px;height:10px;background:#ddd;"></div><div class="r" style="left:30.5px;top:22.700000000000045px;width:0.7px;height:10px;background:#ddd;"></div><div class="r" style="left:37.5px;top:22.700000000000045px;width:0.7px;height:10px;background:#ddd;"></div><div class="r" style="left:44.5px;top:22.700000000000045px;width:0.7px;height:10px;background:#ddd;"></div><div class="r" style="left:51.5px;top:22.700000000000045px;width:0.7px;height:10px;background:#ddd;"></div><div class="r" style="left:12.5px;top:25.2px;width:22.0px;height:1px;background:#1f5f85;opacity:1;"></div></div>
<div class="t" style="left:2.34px;top:858.00px;font-size:13px;line-height:14.94px;color:#3b3b3b;">16</div>
<svg class="s" style="left:176px;top:178px;" width="11" height="9" viewBox="0 0 11 9"><path d="M5.5 1.5 L10 7.5 H1 Z" fill="#6a6a6a" stroke="#6a6a6a" stroke-width="1" stroke-linejoin="round"/></svg>
<div class="r" style="left:177px;top:393px;width:8.5px;height:221px;background:#747474;border-radius:4px;"></div>
<div class="r" style="left:5px;top:74px;width:1474px;height:100px;background:#fff;border-radius:8px;box-shadow:0 1px 3px rgba(0,0,0,0.18);"></div>
<svg class="s" style="left:12px;top:11px;" width="18" height="18" viewBox="0 0 18 18">
<circle cx="9.5" cy="9" r="8" fill="#ed6c47"/>
<path d="M9.5 1 A8 8 0 0 1 17.5 9 L9.5 9 Z" fill="#ff8f6b"/>
<path d="M17.5 9 A8 8 0 0 1 9.5 17 L9.5 9 Z" fill="#d35230"/>
<rect x="1" y="6" width="9.5" height="9.5" rx="1.2" fill="#b7282e"/>
<path d="M4.2 13.6 V8 H6.4 A1.7 1.7 0 0 1 6.4 11.3 H4.2" fill="none" stroke="#fff" stroke-width="1.4"/>
</svg>
<div class="t" style="left:45.00px;top:14.00px;font-size:11.5px;line-height:13.21px;color:#262626;letter-spacing:-0.338px;">AutoSave</div>
<div class="r" style="left:100px;top:9px;width:44px;height:20px;box-sizing:border-box;border:1.3px solid #5a5a5a;border-radius:10px;background:#fbfbfb;"></div>
<svg class="s" style="left:100px;top:9px;" width="44" height="20" viewBox="0 0 44 20"><circle cx="10" cy="10" r="6.8" fill="#5f5f5f"/></svg>
<div class="t" style="left:122.40px;top:14.00px;font-size:11.5px;line-height:13.21px;color:#5f5f5f;letter-spacing:0.536px;">Off</div>
<svg class="s" style="left:157px;top:11px;" width="18" height="18" viewBox="0 0 18 18">
<path d="M1.5 1.5 H14.5 V8 M1.5 1.5 V14.5 Q1.5 16.5 3.5 16.5 H6.5" fill="none" stroke="#2b2b2b" stroke-width="1.2"/>
<path d="M5 1.5 V6 H11 V1.5" fill="none" stroke="#2b2b2b" stroke-width="1.2"/>
<path d="M8.5 11.2 A4 4 0 0 1 15.5 10.2 M15.8 8.3 V10.6 H13.5" fill="none" stroke="#2aa13d" stroke-width="1.5"/>
<path d="M16 13.8 A4 4 0 0 1 9 14.8 M8.7 16.7 V14.4 H11" fill="none" stroke="#2aa13d" stroke-width="1.5"/>
</svg>
<svg class="s" style="left:187px;top:11px;" width="30" height="18" viewBox="0 0 30 18">
<path d="M1.5 2 V7.5 H7" fill="none" stroke="#2b2b2b" stroke-width="1.2"/>
<path d="M1.8 7.3 C5 2.5 13 1.5 14.5 6.5 C15.5 9.5 13 12 6 17" fill="none" stroke="#2b2b2b" stroke-width="1.2"/>
<path d="M21.3 6.6 L24 9.3 L26.7 6.6" fill="none" stroke="#2b2b2b" stroke-width="1.1"/>
</svg>
<svg class="s" style="left:225px;top:11px;" width="18" height="18" viewBox="0 0 18 18">
<path d="M8 1.8 H1 M2.5 1 V8" fill="none" stroke="#2b2b2b" stroke-width="0"/>
<path d="M5 1.5 V7.5 M5 1.7 H0.5" fill="none" stroke="#2b2b2b" stroke-width="0"/>
<path d="M10.8 2.5 A7.3 7.3 0 1 1 2.6 4.8" fill="none" stroke="#2b2b2b" stroke-width="1.2"/>
<path d="M1 1.5 H6.5 V7" fill="none" stroke="#2b2b2b" stroke-width="1.2"/>
</svg>
<svg class="s" style="left:254px;top:11px;" width="17" height="18" viewBox="0 0 17 18">
<path d="M1 1.5 H15 M2 1.5 V10.5 H14 V1.5" fill="none" stroke="#2b2b2b" stroke-width="1.2"/>
<path d="M8 10.5 V15.5 M3.8 15.5 H12.2" fill="none" stroke="#2b2b2b" stroke-width="1.2"/>
<path d="M6.3 3.5 L10.3 6 L6.3 8.5 Z" fill="#2aa13d"/>
</svg>
<svg class="s" style="left:286px;top:14px;" width="10" height="10" viewBox="0 0 10 10"><path d="M1.5 2 H8.5" stroke="#2b2b2b" stroke-width="1.1"/><path d="M2 4.8 L5 7.8 L8 4.8" fill="none" stroke="#2b2b2b" stroke-width="1.1"/></svg>
<div class="t" style="left:321.00px;top:14.00px;font-size:11.5px;line-height:13.21px;color:#262626;letter-spacing:0.136px;">Presentation1.pptx</div>
<svg class="s" style="left:428px;top:11px;" width="16" height="18" viewBox="0 0 16 18">
<path d="M8 1 C5.5 2.8 3.5 3.3 1.3 3.3 V8.5 C1.3 12.5 4.5 15 8 16.5 C11.5 15 14.7 12.5 14.7 8.5 V3.3 C12.5 3.3 10.5 2.8 8 1 Z" fill="none" stroke="#2b2b2b" stroke-width="1.1"/>
<path d="M5.9 6.6 A2.1 2.1 0 1 1 8.6 8.6 C8.1 8.9 8 9.3 8 10.2" fill="none" stroke="#2b2b2b" stroke-width="1.1"/>
<circle cx="8" cy="12.3" r="0.7" fill="#2b2b2b"/>
</svg>
<div class="t" style="left:448.00px;top:14.00px;font-size:11.5px;line-height:13.21px;color:#262626;letter-spacing:0.067px;">No Label</div>
<div class="r" style="left:501px;top:19px;width:3px;height:3px;background:#333;border-radius:50%;"></div>
<div class="t" style="left:510.00px;top:14.00px;font-size:11.5px;line-height:13.21px;color:#262626;letter-spacing:0.089px;">Last Modified: 12</div>
<svg class="s" style="left:600px;top:14px;" width="12" height="13" viewBox="0 0 12 13">
<path d="M2.5 1.5 H9.5 V11.5 Q9.5 12.3 8.3 12.3 H7.3 M2.5 1.5 V7.5 Q2.5 10.8 0.8 12.5 M2.5 4.8 H9.5 M2.5 8 H9.5" fill="none" stroke="#262626" stroke-width="1.05"/>
</svg>
<div class="t" style="left:613.00px;top:14.00px;font-size:11.5px;line-height:13.21px;color:#262626;letter-spacing:-2.091px;">12</div>
<svg class="s" style="left:626px;top:14px;" width="9" height="13" viewBox="0 0 9 13">
<path d="M1 1.5 H7.6 V11.4 H1 Z M1 6.4 H7.6" fill="none" stroke="#262626" stroke-width="1.05"/>
</svg>
<svg class="s" style="left:639px;top:14px;" width="14" height="10" viewBox="0 0 14 10"><path d="M2 3.8 L7 8.8 L12 3.8" fill="none" stroke="#2b2b2b" stroke-width="1.2"/></svg>
<div class="r" style="left:707px;top:4px;width:367px;height:31px;box-sizing:border-box;border:1px solid #dadada;border-bottom-color:#c4c4c4;border-radius:4px;background:#fafafa;box-shadow:0 1px 1px rgba(0,0,0,0.06);"></div>
<svg class="s" style="left:720px;top:12px;" width="16" height="16" viewBox="0 0 16 16"><circle cx="9.7" cy="6" r="4.6" fill="none" stroke="#444" stroke-width="1.1"/><path d="M6.4 9.3 L1.2 14.5" stroke="#444" stroke-width="1.2"/></svg>
<div class="t" style="left:749.00px;top:14.00px;font-size:11.5px;line-height:13.21px;color:#5c5c5c;letter-spacing:0.433px;">Search</div>
<svg class="s" style="left:1307px;top:8px;" width="24" height="24" viewBox="0 0 24 24">
<circle cx="12" cy="12" r="12" fill="#d2d2d2"/>
<circle cx="12" cy="9.2" r="3.6" fill="none" stroke="#444" stroke-width="1.1"/>
<path d="M5.3 18.8 C6.5 14.8 17.5 14.8 18.7 18.8" fill="none" stroke="#444" stroke-width="1.1"/>
</svg>
<div class="r" style="left:1362px;top:19px;width:10px;height:1.2px;background:#262626;"></div>
<div class="r" style="left:1410px;top:15px;width:10px;height:10px;box-sizing:border-box;border:1.2px solid #262626;border-radius:1.5px;"></div>
<svg class="s" style="left:1457px;top:14px;" width="12" height="12" viewBox="0 0 12 12"><path d="M1 1 L11 11 M11 1 L1 11" stroke="#262626" stroke-width="1.1"/></svg>
<div class="t" style="left:19.20px;top:53.00px;font-size:13px;line-height:14.94px;color:#262626;letter-spacing:-0.782px;">File</div>
<div class="t" style="left:65.50px;top:53.00px;font-size:13px;line-height:14.94px;color:#262626;letter-spacing:-0.326px;">Home</div>
<div class="t" style="left:121.20px;top:53.00px;font-size:13px;line-height:14.94px;color:#262626;letter-spacing:-0.183px;">Insert</div>
<div class="t" style="left:173.60px;top:53.00px;font-size:13px;line-height:14.94px;color:#262626;letter-spacing:0.022px;">Draw</div>
<div class="t" style="left:224.20px;top:53.00px;font-size:13px;line-height:14.94px;color:#262626;letter-spacing:-0.193px;">Design</div>
<div class="t" style="left:285.00px;top:53.00px;font-size:13px;line-height:14.94px;color:#262626;letter-spacing:-0.149px;">Transitions</div>
<div class="t" style="left:370.00px;top:53.00px;font-size:13px;line-height:14.94px;color:#262626;letter-spacing:-0.034px;">Animations</div>
<div class="t" style="left:456.80px;top:53.00px;font-size:13px;line-height:14.94px;color:#262626;letter-spacing:-0.204px;">Slide Show</div>
<div class="t" style="left:539.80px;top:53.00px;font-size:13px;line-height:14.94px;color:#262626;letter-spacing:0.059px;">Record</div>
<div class="t" style="left:602.00px;top:53.00px;font-size:13px;line-height:14.94px;color:#262626;letter-spacing:-0.604px;">Review</div>
<div class="t" style="left:661.80px;top:53.00px;font-size:13px;line-height:14.94px;color:#262626;letter-spacing:-0.314px;">View</div>
<div class="t" style="left:709.00px;top:53.00px;font-size:13px;line-height:14.94px;color:#262626;letter-spacing:0.056px;">Developer</div>
<div class="t" style="left:789.00px;top:53.00px;font-size:13px;line-height:14.94px;color:#262626;letter-spacing:-0.178px;">Help</div>
<div class="t" style="left:838.00px;top:53.00px;font-size:13px;line-height:14.94px;color:#262626;letter-spacing:0.205px;">Storyboarding</div>
<div class="t" style="left:943.10px;top:53.00px;font-size:13px;line-height:14.94px;color:#262626;font-weight:bold;letter-spacing:-0.328px;">eCopilot</div>
<div class="r" style="left:943px;top:69px;width:51px;height:2.5px;background:#c43e1c;border-radius:1.5px;"></div>
<div class="r" style="left:1160px;top:47px;width:70px;height:24px;box-sizing:border-box;border:1px solid #8c8c8c;border-radius:4px;background:#f7f7f7;"></div>
<svg class="s" style="left:1164px;top:52px;" width="14" height="14" viewBox="0 0 14 14"><circle cx="7" cy="7" r="5.6" fill="none" stroke="#262626" stroke-width="1.1"/><circle cx="7" cy="7" r="3.2" fill="#262626"/></svg>
<div class="t" style="left:1181.40px;top:53.00px;font-size:13px;line-height:14.94px;color:#262626;letter-spacing:-0.161px;">Record</div>
<div class="r" style="left:1238px;top:47px;width:125px;height:24px;box-sizing:border-box;border:1px solid #8c8c8c;border-radius:4px;background:#f7f7f7;"></div>
<svg class="s" style="left:1242px;top:51px;" width="14" height="15" viewBox="0 0 14 15">
<circle cx="4" cy="3" r="1.8" fill="#262626"/><circle cx="10" cy="2.6" r="1.6" fill="#262626"/>
<rect x="0.8" y="5.5" width="7" height="8" rx="1" fill="#262626"/>
<rect x="8.5" y="5" width="4.6" height="7" rx="1.5" fill="none" stroke="#262626" stroke-width="1"/>
<path d="M2.6 7.5 H6 M4.3 7.5 V12" stroke="#fff" stroke-width="1"/>
</svg>
<div class="t" style="left:1259.00px;top:53.00px;font-size:13px;line-height:14.94px;color:#262626;letter-spacing:-0.173px;">Present in Teams</div>
<div class="r" style="left:1372px;top:47px;width:24px;height:24px;box-sizing:border-box;border:1px solid #8c8c8c;border-radius:4px;background:#f7f7f7;"></div>
<svg class="s" style="left:1377px;top:53px;" width="14" height="13" viewBox="0 0 14 13"><path d="M1.5 1.5 H12.5 V8.5 H6 L3.5 11 V8.5 H1.5 Z" fill="none" stroke="#262626" stroke-width="1.1" stroke-linejoin="round"/></svg>
<div class="r" style="left:1404px;top:47px;width:71px;height:24px;background:#c43e1c;border-radius:4px;"></div>
<svg class="s" style="left:1407px;top:51px;" width="15" height="15" viewBox="0 0 15 15">
<path d="M6 3.5 H2 V13 H11.5 V10" fill="none" stroke="#fff" stroke-width="1.1"/>
<path d="M5 10 C5.5 6.5 8 5 11 5 V2.5 L14 6 L11 9.5 V7 C8.8 7 6.5 8 5 10 Z" fill="none" stroke="#fff" stroke-width="1.1" stroke-linejoin="round"/>
</svg>
<div class="t" style="left:1425.00px;top:53.00px;font-size:13px;line-height:14.94px;color:#ffffff;letter-spacing:-0.497px;">Share</div>
<svg class="s" style="left:1463px;top:56px;" width="9" height="6" viewBox="0 0 9 6"><path d="M1 1 L4.5 4.5 L8 1" fill="none" stroke="#fff" stroke-width="1.2"/></svg>
<div class="t" style="left:19.55px;top:118.00px;font-size:12px;line-height:13.79px;color:#262626;letter-spacing:0.093px;">Intelligent</div>
<div class="t" style="left:22.30px;top:134.00px;font-size:12px;line-height:13.79px;color:#262626;letter-spacing:-0.081px;">Dialogue</div>
<div class="t" style="left:93.85px;top:118.00px;font-size:12px;line-height:13.79px;color:#262626;letter-spacing:-0.433px;">Generate Full</div>
<div class="t" style="left:112.70px;top:134.00px;font-size:12px;line-height:13.79px;color:#262626;letter-spacing:-0.577px;">Slides</div>
<div class="t" style="left:169.30px;top:118.00px;font-size:12px;line-height:13.79px;color:#262626;letter-spacing:-0.368px;">Generate One</div>
<div class="t" style="left:192.60px;top:134.00px;font-size:12px;line-height:13.79px;color:#262626;letter-spacing:-0.321px;">Slide</div>
<div class="t" style="left:262.20px;top:118.00px;font-size:12px;line-height:13.79px;color:#262626;letter-spacing:-0.304px;">Develop a</div>
<div class="t" style="left:264.55px;top:134.00px;font-size:12px;line-height:13.79px;color:#262626;letter-spacing:0.125px;">template</div>
<div class="t" style="left:332.90px;top:118.00px;font-size:12px;line-height:13.79px;color:#262626;letter-spacing:-0.184px;">Template</div>
<div class="t" style="left:321.55px;top:134.00px;font-size:12px;line-height:13.79px;color:#262626;letter-spacing:0.006px;">management</div>
<div class="t" style="left:404.85px;top:118.00px;font-size:12px;line-height:13.79px;color:#262626;letter-spacing:-0.066px;">Layout</div>
<div class="t" style="left:399.25px;top:134.00px;font-size:12px;line-height:13.79px;color:#262626;letter-spacing:0.125px;">template</div>
<div class="t" style="left:467.20px;top:118.00px;font-size:12px;line-height:13.79px;color:#262626;letter-spacing:-0.276px;">Full speech</div>
<div class="t" style="left:482.15px;top:134.00px;font-size:12px;line-height:13.79px;color:#262626;letter-spacing:-0.164px;">notes</div>
<div class="t" style="left:535.90px;top:118.00px;font-size:12px;line-height:13.79px;color:#262626;letter-spacing:-0.045px;">Single-page</div>
<div class="t" style="left:533.40px;top:134.00px;font-size:12px;line-height:13.79px;color:#262626;letter-spacing:-0.253px;">speech notes</div>
<div class="t" style="left:654.65px;top:118.00px;font-size:12px;line-height:13.79px;color:#262626;letter-spacing:-0.436px;">Text</div>
<div class="t" style="left:735.65px;top:118.00px;font-size:12px;line-height:13.79px;color:#262626;letter-spacing:-0.014px;">Full text</div>
<div class="t" style="left:727.85px;top:134.00px;font-size:12px;line-height:13.79px;color:#262626;letter-spacing:-0.147px;">summarize</div>
<div class="t" style="left:796.85px;top:118.00px;font-size:12px;line-height:13.79px;color:#262626;letter-spacing:-0.005px;">Full-Text</div>
<div class="t" style="left:793.60px;top:134.00px;font-size:12px;line-height:13.79px;color:#262626;letter-spacing:-0.248px;">Tanslation</div>
<div class="t" style="left:867.60px;top:118.00px;font-size:12px;line-height:13.79px;color:#262626;letter-spacing:-0.028px;">My Knowledge</div>
<div class="t" style="left:895.20px;top:134.00px;font-size:12px;line-height:13.79px;color:#262626;letter-spacing:-1.384px;">Base</div>
<div class="t" style="left:952.75px;top:118.00px;font-size:12px;line-height:13.79px;color:#262626;letter-spacing:-0.123px;">Settings</div>
<div class="t" style="left:626.00px;top:134.00px;font-size:12px;line-height:13.79px;color:#262626;letter-spacing:0.210px;">Optimization</div>
<svg class="s" style="left:697px;top:137px;" width="8" height="6" viewBox="0 0 8 6"><path d="M1.5 1.5 L4 4 L6.5 1.5" fill="none" stroke="#333" stroke-width="1"/></svg>
<div class="t" style="left:34.55px;top:158.00px;font-size:12px;line-height:13.79px;color:#262626;letter-spacing:-0.682px;">Chat</div>
<div class="t" style="left:112.15px;top:158.00px;font-size:12px;line-height:13.79px;color:#262626;letter-spacing:-0.257px;">One-Click Generation</div>
<div class="t" style="left:322.40px;top:158.00px;font-size:12px;line-height:13.79px;color:#262626;letter-spacing:-0.270px;">Ppt template</div>
<div class="t" style="left:500.15px;top:158.00px;font-size:12px;line-height:13.79px;color:#262626;letter-spacing:-0.571px;">Speech Notes</div>
<div class="t" style="left:616.35px;top:158.00px;font-size:12px;line-height:13.79px;color:#262626;letter-spacing:-0.212px;">Select optimization</div>
<div class="t" style="left:737.45px;top:158.00px;font-size:12px;line-height:13.79px;color:#262626;letter-spacing:-0.225px;">Full text processing</div>
<div class="t" style="left:910.05px;top:158.00px;font-size:12px;line-height:13.79px;color:#262626;letter-spacing:-0.323px;">Settings</div>
<div class="r" style="left:82px;top:79px;width:1px;height:89px;background:#d6d6d6;"></div>
<div class="r" style="left:251px;top:79px;width:1px;height:89px;background:#d6d6d6;"></div>
<div class="r" style="left:456px;top:79px;width:1px;height:89px;background:#d6d6d6;"></div>
<div class="r" style="left:612px;top:79px;width:1px;height:89px;background:#d6d6d6;"></div>
<div class="r" style="left:717px;top:79px;width:1px;height:89px;background:#d6d6d6;"></div>
<div class="r" style="left:856px;top:79px;width:1px;height:89px;background:#d6d6d6;"></div>
<div class="r" style="left:1005px;top:79px;width:1px;height:89px;background:#d6d6d6;"></div>
<svg class="s" style="left:32px;top:83px;" width="28" height="26" viewBox="0 0 28 26">
<path d="M14 2 C7.2 2 1.8 5.8 1.8 11 C1.8 14.2 3.8 16.6 6.8 18.2 L6.3 23.8 L11.6 19.8 C12.4 19.9 13.2 20 14 20 C20.8 20 26.2 16.2 26.2 11 C26.2 5.8 20.8 2 14 2 Z" stroke="#2b2b2b" stroke-width="1.5" fill="none" stroke-linejoin="round" stroke-linecap="round"/>
<path d="M9.8 9.2 H17.8 M10.8 12.8 H16.8" stroke="#2b2b2b" stroke-width="1.5" fill="none" stroke-linejoin="round" stroke-linecap="round"/>
</svg>
<svg class="s" style="left:115px;top:85px;" width="26" height="26" viewBox="0 0 26 26">
<path d="M13 4.5 C10.5 2.5 5 2.2 2.5 3.3 V20.5 C5 19.6 10.5 19.8 13 21.8 C15.5 19.8 21 19.6 23.5 20.5 V3.3 C21 2.2 15.5 2.5 13 4.5 Z" stroke="#2b2b2b" stroke-width="1.5" fill="none" stroke-linejoin="round" stroke-linecap="round"/>
<path d="M13 4.5 V23.5" stroke="#2b2b2b" stroke-width="1.5" fill="none" stroke-linejoin="round" stroke-linecap="round"/>
</svg>
<svg class="s" style="left:193px;top:85px;" width="25" height="25" viewBox="0 0 25 25">
<rect x="1.6" y="1.6" width="21" height="20.6" rx="2.5" stroke="#2b2b2b" stroke-width="1.5" fill="none" stroke-linejoin="round" stroke-linecap="round"/>
<path d="M7.2 7.2 H16.5 M7.2 11.6 H12.8 M7.2 16 H16.5" stroke="#2b2b2b" stroke-width="1.5" fill="none" stroke-linejoin="round" stroke-linecap="round"/>
</svg>
<svg class="s" style="left:276px;top:85px;" width="25" height="25" viewBox="0 0 25 25">
<path d="M2.3 2.5 H21.3 M2.3 2.5 V21.5" stroke="#2b2b2b" stroke-width="1.1" fill="none"/>
<circle cx="2.3" cy="2.5" r="1.3" fill="#2b2b2b"/><circle cx="21.3" cy="2.5" r="1.3" fill="#2b2b2b"/><circle cx="2.3" cy="21.5" r="1.3" fill="#2b2b2b"/>
<path d="M9.5 19 L19.8 8.6 L22.5 11.3 L12.2 21.7 L9.2 22.2 Z M18 10.4 L20.7 13.1" stroke="#2b2b2b" stroke-width="1.1" fill="none" stroke-linejoin="round"/>
</svg>
<svg class="s" style="left:345px;top:85px;" width="25" height="25" viewBox="0 0 25 25">
<rect x="1.5" y="1.5" width="8.3" height="21.3" rx="1.8" stroke="#2b2b2b" stroke-width="1.5" fill="none" stroke-linejoin="round" stroke-linecap="round"/>
<rect x="12.5" y="1.5" width="10.3" height="8.4" rx="1.8" stroke="#2b2b2b" stroke-width="1.5" fill="none" stroke-linejoin="round" stroke-linecap="round"/>
<rect x="12.5" y="12.5" width="10.3" height="10.3" rx="1.8" stroke="#2b2b2b" stroke-width="1.5" fill="none" stroke-linejoin="round" stroke-linecap="round"/>
</svg>
<svg class="s" style="left:411px;top:85px;" width="25" height="25" viewBox="0 0 25 25">
<rect x="1.5" y="1.5" width="21.5" height="21.3" rx="3.5" stroke="#2b2b2b" stroke-width="1.5" fill="none" stroke-linejoin="round" stroke-linecap="round"/>
<path d="M1.5 6.8 H23 M9.2 6.8 V22.8" stroke="#2b2b2b" stroke-width="1.5" fill="none" stroke-linejoin="round" stroke-linecap="round"/>
</svg>
<svg class="s" style="left:484px;top:85px;" width="26" height="25" viewBox="0 0 26 25">
<path d="M2.5 17.5 V14 L14 2.5 L18.8 6.2 L7.5 17.5 Z" stroke="#2b2b2b" stroke-width="1.5" fill="none" stroke-linejoin="round" stroke-linecap="round"/>
<path d="M1.8 22.5 H22.5 M13.8 18 H24" stroke="#2b2b2b" stroke-width="1.5" fill="none" stroke-linejoin="round" stroke-linecap="round"/>
</svg>
<svg class="s" style="left:557px;top:84px;" width="22" height="26" viewBox="0 0 22 26">
<path d="M1.5 1.5 H20 V24.5 L10.8 19.8 L1.5 24.5 Z" stroke="#2b2b2b" stroke-width="1.5" fill="none" stroke-linejoin="round" stroke-linecap="round"/>
<path d="M7 8 H15 M7 13 H15" stroke="#2b2b2b" stroke-width="1.5" fill="none" stroke-linejoin="round" stroke-linecap="round"/>
</svg>
<svg class="s" style="left:648.5px;top:80.4px;" width="33" height="33" viewBox="0 0 33 33">
<ellipse cx="16.5" cy="16.5" rx="15.3" ry="5.1" transform="rotate(45 16.5 16.5)" stroke="#2b2b2b" stroke-width="1.5" fill="none" stroke-linejoin="round" stroke-linecap="round"/>
<ellipse cx="16.5" cy="16.5" rx="15.3" ry="5.1" transform="rotate(-45 16.5 16.5)" stroke="#2b2b2b" stroke-width="1.5" fill="none" stroke-linejoin="round" stroke-linecap="round"/>
<circle cx="16.5" cy="16.5" r="2.6" stroke="#2b2b2b" stroke-width="1.5" fill="none" stroke-linejoin="round" stroke-linecap="round"/>
<rect x="5.3" y="7.6" width="2.6" height="1.8" fill="#fff" transform="rotate(-45 6.6 8.5)"/>
<rect x="24.6" y="9.5" width="2.6" height="1.8" fill="#fff" transform="rotate(-45 25.9 10.4)"/>
<rect x="19.6" y="24.8" width="2.6" height="1.8" fill="#fff" transform="rotate(-45 20.9 25.7)"/>
</svg>
<svg class="s" style="left:745px;top:83px;" width="24" height="28" viewBox="0 0 24 28">
<rect x="1.5" y="4" width="21" height="22.5" rx="3" stroke="#2b2b2b" stroke-width="1.5" fill="none" stroke-linejoin="round" stroke-linecap="round"/>
<rect x="7" y="1.5" width="10" height="4.2" rx="2" fill="#fff" stroke="#2b2b2b" stroke-width="1.5" fill="none" stroke-linejoin="round" stroke-linecap="round"/>
<path d="M6.3 10 H6.5 M6.3 14.3 H6.5 M9.8 10 H17.8 M9.8 14.3 H17.8 M6.3 19.3 H17.8" stroke="#2b2b2b" stroke-width="1.5" fill="none" stroke-linejoin="round" stroke-linecap="round"/>
</svg>
<svg class="s" style="left:806px;top:85px;" width="27" height="26" viewBox="0 0 27 26">
<path d="M2 3.8 L13 1.5 V23.8 L2 21.5 Z" fill="none" stroke="#1e1e1e" stroke-width="1.5" stroke-linejoin="round"/>
<path d="M16 3.2 H24.5 V22.4 H16" fill="none" stroke="#1e1e1e" stroke-width="1.5" stroke-linejoin="round"/>
<path d="M4.8 15.5 L7.4 8.5 L10 15.5 M5.7 13 H9.1" fill="none" stroke="#1e1e1e" stroke-width="1"/>
<ellipse cx="19.6" cy="11.8" rx="2.6" ry="2.2" fill="none" stroke="#1e1e1e" stroke-width="1"/>
<path d="M19.6 8.3 V15.5" stroke="#1e1e1e" stroke-width="1"/>
</svg>
<div class="r" style="left:786px;top:78px;width:69px;height:73px;box-sizing:border-box;border:2.2px solid #e8383d;"></div>
<svg class="s" style="left:843px;top:154px;" width="20" height="20" viewBox="0 0 20 20"><circle cx="10" cy="10" r="10" fill="#e8383d"/><path d="M8 7.2 L10.6 5.5 V14.5" fill="none" stroke="#fff" stroke-width="1.6"/></svg>
<svg class="s" style="left:893px;top:84px;" width="27" height="26" viewBox="0 0 27 26">
<path d="M13.5 5 C10.5 2 5 1.8 2.5 3 V18.8 C5 17.8 10.5 18 13.5 20.8 C16.5 18 22 17.8 24.5 18.8 V3 C22 1.8 16.5 2 13.5 5 Z" stroke="#2b2b2b" stroke-width="1.5" fill="none" stroke-linejoin="round" stroke-linecap="round"/>
<path d="M13.5 5 V20.8" stroke="#2b2b2b" stroke-width="1.5" fill="none" stroke-linejoin="round" stroke-linecap="round"/>
<path d="M1.8 22.3 C5 21 10 21 13.5 23.8 C17 21 22 21 25.2 22.3" stroke="#2b2b2b" stroke-width="1.5" fill="none" stroke-linejoin="round" stroke-linecap="round"/>
</svg>
<svg class="s" style="left:961px;top:84px;" width="26" height="26" viewBox="0 0 26 26"><path d="M24.60 12.80 L24.58 13.31 L24.53 13.82 L24.42 14.32 L24.18 14.79 L23.70 15.19 L22.90 15.48 L22.09 15.70 L21.59 15.96 L21.29 16.28 L21.08 16.61 L20.89 16.96 L20.69 17.30 L20.50 17.64 L20.29 17.98 L20.11 18.33 L19.98 18.74 L20.01 19.31 L20.22 20.12 L20.37 20.96 L20.26 21.58 L19.97 22.02 L19.60 22.36 L19.18 22.66 L18.75 22.93 L18.30 23.17 L17.83 23.38 L17.35 23.53 L16.82 23.57 L16.23 23.35 L15.58 22.80 L14.99 22.21 L14.50 21.90 L14.09 21.81 L13.69 21.79 L13.29 21.80 L12.90 21.80 L12.51 21.80 L12.11 21.79 L11.71 21.81 L11.30 21.90 L10.81 22.21 L10.22 22.80 L9.57 23.35 L8.98 23.57 L8.45 23.53 L7.97 23.38 L7.50 23.17 L7.05 22.93 L6.62 22.66 L6.20 22.36 L5.83 22.02 L5.54 21.58 L5.43 20.96 L5.58 20.12 L5.79 19.31 L5.82 18.74 L5.69 18.33 L5.51 17.98 L5.30 17.64 L5.11 17.30 L4.91 16.96 L4.72 16.61 L4.51 16.28 L4.21 15.96 L3.71 15.70 L2.90 15.48 L2.10 15.19 L1.62 14.79 L1.38 14.32 L1.27 13.82 L1.22 13.31 L1.20 12.80 L1.22 12.29 L1.27 11.78 L1.38 11.28 L1.62 10.81 L2.10 10.41 L2.90 10.12 L3.71 9.90 L4.21 9.64 L4.51 9.32 L4.72 8.99 L4.91 8.64 L5.11 8.30 L5.30 7.96 L5.51 7.62 L5.69 7.27 L5.82 6.86 L5.79 6.29 L5.58 5.48 L5.43 4.64 L5.54 4.02 L5.83 3.58 L6.20 3.24 L6.62 2.94 L7.05 2.67 L7.50 2.43 L7.97 2.22 L8.45 2.07 L8.98 2.03 L9.57 2.25 L10.22 2.80 L10.81 3.39 L11.30 3.70 L11.71 3.79 L12.11 3.81 L12.51 3.80 L12.90 3.80 L13.29 3.80 L13.69 3.81 L14.09 3.79 L14.50 3.70 L14.99 3.39 L15.58 2.80 L16.23 2.25 L16.82 2.03 L17.35 2.07 L17.83 2.22 L18.30 2.43 L18.75 2.67 L19.18 2.94 L19.60 3.24 L19.97 3.58 L20.26 4.02 L20.37 4.64 L20.22 5.48 L20.01 6.29 L19.98 6.86 L20.11 7.27 L20.29 7.62 L20.50 7.96 L20.69 8.30 L20.89 8.64 L21.08 8.99 L21.29 9.32 L21.59 9.64 L22.09 9.90 L22.90 10.12 L23.70 10.41 L24.18 10.81 L24.42 11.28 L24.53 11.78 L24.58 12.29 Z" fill="none" stroke="#2b2b2b" stroke-width="1.4" stroke-linejoin="round"/><circle cx="12.9" cy="12.8" r="3.7" fill="none" stroke="#2b2b2b" stroke-width="1.4"/></svg>
<svg class="s" style="left:1457px;top:155px;" width="14" height="9" viewBox="0 0 14 9"><path d="M1.5 1.5 L6.8 6.8 L12 1.5" fill="none" stroke="#2b2b2b" stroke-width="1.2"/></svg>
<div class="t" style="left:1151.00px;top:189.00px;font-size:15px;line-height:17.23px;color:#262626;letter-spacing:0.209px;">eCopilot</div>
<svg class="s" style="left:1423px;top:193px;" width="16" height="10" viewBox="0 0 16 10"><path d="M1.5 1.5 L8 8 L14.5 1.5" fill="none" stroke="#333" stroke-width="1.2"/></svg>
<svg class="s" style="left:1456px;top:191px;" width="13" height="13" viewBox="0 0 13 13"><path d="M1.5 1.5 L11.5 11.5 M11.5 1.5 L1.5 11.5" fill="none" stroke="#333" stroke-width="1.2"/></svg>
<div class="r" style="left:1456px;top:217px;width:17px;height:44px;box-sizing:border-box;border:1px solid #d0d0d0;border-right:none;background:#fff;"></div>
<svg class="s" style="left:1461px;top:234px;" width="6" height="9" viewBox="0 0 6 9"><path d="M4.8 1 L1.5 4.5 L4.8 8" fill="none" stroke="#555" stroke-width="1.1"/></svg>
<div class="t" style="left:1297.80px;top:226.00px;font-size:13.5px;line-height:15.51px;color:#111111;font-weight:bold;letter-spacing:0.334px;">15-20%</div>
<div class="t" style="left:1351.50px;top:226.00px;font-size:13.5px;line-height:15.51px;color:#111111;letter-spacing:-0.047px;">revenue</div>
<div class="t" style="left:1297.50px;top:245.00px;font-size:13.5px;line-height:15.51px;color:#111111;letter-spacing:0.097px;">growth, increase</div>
<div class="t" style="left:1297.50px;top:264.00px;font-size:13.5px;line-height:15.51px;color:#111111;letter-spacing:0.108px;">market share by</div>
<div class="t" style="left:1297.50px;top:283.00px;font-size:13.5px;line-height:15.51px;color:#111111;font-weight:bold;letter-spacing:0.495px;">3-5</div>
<div class="t" style="left:1323.50px;top:283.00px;font-size:13.5px;line-height:15.51px;color:#111111;letter-spacing:0.106px;">percentage</div>
<div class="t" style="left:1297.00px;top:302.00px;font-size:13.5px;line-height:15.51px;color:#111111;letter-spacing:0.238px;">points.</div>
<svg class="s" style="left:1278px;top:325px;" width="9" height="9" viewBox="0 0 9 9"><circle cx="4.5" cy="4.5" r="2.8" fill="none" stroke="#222" stroke-width="1.1"/></svg>
<div class="t" style="left:1297.00px;top:321.00px;font-size:13.5px;line-height:15.51px;color:#111111;font-weight:bold;letter-spacing:0.352px;">Growth</div>
<div class="t" style="left:1297.00px;top:340.00px;font-size:13.5px;line-height:15.51px;color:#111111;font-weight:bold;letter-spacing:0.176px;">Initiatives:</div>
<div class="t" style="left:1297.00px;top:359.00px;font-size:13.5px;line-height:15.51px;color:#111111;font-weight:bold;letter-spacing:0.458px;">Digital</div>
<div class="t" style="left:1297.00px;top:378.00px;font-size:13.5px;line-height:15.51px;color:#111111;font-weight:bold;letter-spacing:0.288px;">transformation</div>
<div class="t" style="left:1397.00px;top:378.00px;font-size:13.5px;line-height:15.51px;color:#111111;">,</div>
<div class="t" style="left:1297.00px;top:397.00px;font-size:13.5px;line-height:15.51px;color:#111111;font-weight:bold;letter-spacing:0.259px;">product</div>
<div class="t" style="left:1297.00px;top:416.00px;font-size:13.5px;line-height:15.51px;color:#111111;font-weight:bold;letter-spacing:0.195px;">innovation</div>
<div class="t" style="left:1367.50px;top:416.00px;font-size:13.5px;line-height:15.51px;color:#111111;letter-spacing:0.119px;">, and</div>
<div class="t" style="left:1297.00px;top:435.00px;font-size:13.5px;line-height:15.51px;color:#111111;font-weight:bold;letter-spacing:0.333px;">international</div>
<div class="t" style="left:1297.00px;top:454.00px;font-size:13.5px;line-height:15.51px;color:#111111;font-weight:bold;letter-spacing:0.004px;">expansion</div>
<div class="t" style="left:1368.00px;top:454.00px;font-size:13.5px;line-height:15.51px;color:#111111;letter-spacing:-0.055px;">are</div>
<div class="t" style="left:1297.00px;top:473.00px;font-size:13.5px;line-height:15.51px;color:#111111;letter-spacing:0.090px;">key drivers.</div>
<div class="r" style="left:1217px;top:513px;width:44px;height:24px;box-sizing:border-box;border:1px solid #c2e7b0;border-radius:3px;background:#f0f9eb;"></div>
<div class="t" style="left:1223.00px;top:519.00px;font-size:12.5px;line-height:14.36px;color:#67c23a;letter-spacing:0.133px;">Apply</div>
<svg class="s" style="left:1271px;top:517px;" width="16" height="15" viewBox="0 0 16 15"><path d="M1 7 H4.5 V13.5 H1 Z" fill="none" stroke="#222" stroke-width="1.2" stroke-linejoin="round"/><path d="M4.5 7 L8 1.2 C9.5 1.2 10 2.5 9.5 4 L9 6.5 H13.8 C14.6 6.5 15 7.2 14.8 8 L13.5 13 C13.3 13.5 13 13.5 12.5 13.5 H4.5" fill="none" stroke="#222" stroke-width="1.2" stroke-linejoin="round"/></svg>
<svg class="s" style="left:1297px;top:518px;" width="16" height="15" viewBox="0 0 16 15"><path d="M1 1.5 H4.5 V8 H1 Z" fill="none" stroke="#222" stroke-width="1.2" stroke-linejoin="round"/><path d="M4.5 8 L8 13.8 C9.5 13.8 10 12.5 9.5 11 L9 8.5 H13.8 C14.6 8.5 15 7.8 14.8 7 L13.5 2 C13.3 1.5 13 1.5 12.5 1.5 H4.5" fill="none" stroke="#222" stroke-width="1.2" stroke-linejoin="round"/></svg>
<svg class="s" style="left:1324px;top:517px;" width="14" height="15" viewBox="0 0 14 15"><path d="M1.5 12 V3 Q1.5 1.5 3 1.5 H10" fill="none" stroke="#777" stroke-width="1.2"/><rect x="4" y="4" width="8.8" height="10" rx="1.5" fill="none" stroke="#777" stroke-width="1.2"/></svg>
<svg class="s" style="left:1349px;top:517px;" width="16" height="15" viewBox="0 0 16 15"><path d="M1 5 H4 L8.5 1 V14 L4 10 H1 Z" fill="none" stroke="#222" stroke-width="1.2" stroke-linejoin="round"/><path d="M11 4.5 Q13 7.5 11 10.5 M12.8 2.5 Q16 7.5 12.8 12.5" fill="none" stroke="#222" stroke-width="1.1"/></svg>
<div class="t" style="left:1204.90px;top:569.00px;font-size:13.5px;line-height:15.51px;color:#606266;letter-spacing:-0.304px;">Target</div>
<div class="t" style="left:1181.20px;top:588.00px;font-size:13.5px;line-height:15.51px;color:#606266;letter-spacing:-0.052px;">Language</div>
<div class="t" style="left:1206.00px;top:621.00px;font-size:13.5px;line-height:15.51px;color:#606266;letter-spacing:0.282px;">Apply</div>
<div class="t" style="left:1186.90px;top:640.00px;font-size:13.5px;line-height:15.51px;color:#606266;letter-spacing:0.371px;">Methods</div>
<div class="r" style="left:1253px;top:569px;width:150px;height:32px;box-sizing:border-box;border:1px solid #dcdfe6;border-radius:6px;background:#fff;"></div>
<div class="t" style="left:1269.50px;top:578.00px;font-size:13.5px;line-height:15.51px;color:#1a1a1a;letter-spacing:-0.839px;">Chinese</div>
<svg class="s" style="left:1334px;top:575px;" width="20" height="20" viewBox="0 0 20 20"><circle cx="10" cy="10" r="9.9" fill="#f03e3e"/><text x="10" y="14.2" font-family="Liberation Sans" font-size="12" fill="#fff" text-anchor="middle">2</text></svg>
<svg class="s" style="left:1379px;top:583px;" width="13" height="8" viewBox="0 0 13 8"><path d="M1 1 L6.5 6.5 L12 1" fill="none" stroke="#a8abb2" stroke-width="1.1"/></svg>
<svg class="s" style="left:1412.5px;top:562.5px;" width="36" height="36" viewBox="0 0 36 36">
<defs><clipPath id="pc"><circle cx="18" cy="18" r="17.8"/></clipPath></defs>
<g clip-path="url(#pc)">
<rect width="36" height="36" fill="#7d6a58"/>
<rect x="14" y="0" width="22" height="13" fill="#4b7a3e"/>
<path d="M24 2 C28 1 33 3 36 6 V12 H22 Z" fill="#2f5a2a"/>
<path d="M20 12 H36 V30 H20 Z" fill="#a07e5c"/>
<path d="M20 15.5 H36 M20 19.5 H36 M20 23.5 H36 M20 27 H36" stroke="#6d5138" stroke-width="1.2"/>
<path d="M0 34 H36 V36 H0 Z" fill="#8a7460"/>
<path d="M1 14 C3 11 8 12 12 13 C17 14 22 17 22 23 C22 28 21 32 19 35 H3 C0 31 -1 20 1 14 Z" fill="#121212"/>
<path d="M9 17 C12 16 15 17 16 19 L16.5 31 H10 Z" fill="#e8e2d8"/>
<ellipse cx="14.5" cy="8.2" rx="7.6" ry="6.8" fill="#f4f4f2"/>
<ellipse cx="8.5" cy="3" rx="2.6" ry="2.3" fill="#111"/><ellipse cx="20.3" cy="3" rx="2.6" ry="2.3" fill="#111"/>
<ellipse cx="11.6" cy="8" rx="1.7" ry="2.2" fill="#161616" transform="rotate(20 11.6 8)"/><ellipse cx="17.4" cy="8" rx="1.7" ry="2.2" fill="#161616" transform="rotate(-20 17.4 8)"/>
<ellipse cx="14.5" cy="11.5" rx="1.2" ry="0.9" fill="#111"/>
<path d="M22 30 C24 28 27 29 27 32 L26 35 H21 Z" fill="#151515"/>
</g></svg>
<div class="r" style="left:1253px;top:621px;width:150px;height:32px;background:#409eff;border-radius:4px;"></div>
<div class="t" style="left:1299.90px;top:631.00px;font-size:12.5px;line-height:14.36px;color:#ffffff;font-weight:bold;letter-spacing:-0.868px;">Translation</div>
<svg class="s" style="left:1374px;top:626px;" width="20" height="20" viewBox="0 0 20 20"><circle cx="10" cy="10" r="9.9" fill="#f03e3e"/><text x="10" y="14.2" font-family="Liberation Sans" font-size="12" fill="#fff" text-anchor="middle">3</text></svg>
<div class="r" style="left:1468px;top:665px;width:4px;height:43px;background:#c8c8c8;border-radius:2px;"></div>
<div class="r" style="left:1152px;top:708px;width:320px;height:6px;background:linear-gradient(180deg,rgba(0,0,0,0),rgba(0,0,0,0.045));"></div>
<div class="r" style="left:1152px;top:713.5px;width:320px;height:1px;background:#ececec;"></div>
<svg class="s" style="left:1413px;top:734px;" width="14" height="14" viewBox="0 0 14 14"><path d="M7 1 V13 M1 7 H13" stroke="#444" stroke-width="1.2"/></svg>
<svg class="s" style="left:1440px;top:733px;" width="16" height="16" viewBox="0 0 16 16"><circle cx="8" cy="8" r="6.8" fill="none" stroke="#444" stroke-width="1.2"/><path d="M8 4.3 V8.5 H11" fill="none" stroke="#444" stroke-width="1.2"/></svg>
<div class="r" style="left:1164px;top:763px;width:296px;height:122px;box-sizing:border-box;border:1px solid #a9c3f2;border-radius:10px;background:#f6f8fc;"></div>
<div class="r" style="left:1179px;top:779px;width:1.2px;height:17px;background:#111;"></div>
<div class="t" style="left:1179.30px;top:781.00px;font-size:13.5px;line-height:15.51px;color:#a8abb2;letter-spacing:0.145px;">Say something, Shift+Enter=line break,</div>
<div class="t" style="left:1179.30px;top:800.00px;font-size:13.5px;line-height:15.51px;color:#a8abb2;letter-spacing:0.180px;">Enter=send, enter @ to select knowledge</div>
<div class="t" style="left:1179.30px;top:819.00px;font-size:13.5px;line-height:15.51px;color:#a8abb2;letter-spacing:-0.558px;">base</div>
<svg class="s" style="left:1178px;top:857px;" width="14" height="14" viewBox="0 0 14 14"><path d="M7 0.5 V13.5 M0.5 7 H13.5" stroke="#222" stroke-width="1.5"/></svg>
<svg class="s" style="left:1327px;top:860px;" width="16" height="16" viewBox="0 0 16 16"><path d="M12 7 V2 H1.5 V14 H8" fill="none" stroke="#333" stroke-width="1.1" stroke-linejoin="round"/><path d="M4 5.5 H9.5 M4 8.5 H8.5 M4 11.5 H7" fill="none" stroke="#333" stroke-width="1.1" stroke-linejoin="round"/><path d="M13 8 L10.5 11.5 H13 L10.5 15" fill="none" stroke="#333" stroke-width="1.1" stroke-linejoin="round"/></svg>
<svg class="s" style="left:1352px;top:860px;" width="16" height="16" viewBox="0 0 16 16"><rect x="1.5" y="1.5" width="12" height="13" rx="1" fill="none" stroke="#333" stroke-width="1.1" stroke-linejoin="round"/><path d="M4 8 H11 M7.5 3.8 V6 M6 5 L7.5 6.5 L9 5 M7.5 12.2 V10 M6 11 L7.5 9.5 L9 11" fill="none" stroke="#333" stroke-width="1.1" stroke-linejoin="round"/></svg>
<svg class="s" style="left:1377px;top:859px;" width="16" height="18" viewBox="0 0 16 18"><rect x="5" y="1" width="6" height="10" rx="3" fill="none" stroke="#333" stroke-width="1.1" stroke-linejoin="round"/><path d="M2.5 8 Q2.5 13.5 8 13.5 Q13.5 13.5 13.5 8 M8 13.5 V16.5 M4.5 16.5 H11.5" fill="none" stroke="#333" stroke-width="1.1" stroke-linejoin="round"/></svg>
<svg class="s" style="left:1402px;top:860px;" width="16" height="16" viewBox="0 0 16 16"><circle cx="8" cy="8" r="6.8" fill="none" stroke="#333" stroke-width="1.1" stroke-linejoin="round"/><ellipse cx="8" cy="8" rx="3" ry="6.8" fill="none" stroke="#333" stroke-width="1.1" stroke-linejoin="round"/><path d="M1.2 8 H14.8 M2.2 4.5 H13.8 M2.2 11.5 H13.8 M8 1.2 V14.8" fill="none" stroke="#333" stroke-width="1.1" stroke-linejoin="round"/></svg>
<svg class="s" style="left:1427px;top:860px;" width="16" height="16" viewBox="0 0 16 16"><path d="M1.5 2 L14.5 8 L1.5 14 L4 8 Z M4 8 H9" fill="none" stroke="#333" stroke-width="1.1" stroke-linejoin="round"/></svg>
<svg class="s" style="left:1123px;top:178px;" width="11" height="9" viewBox="0 0 11 9"><path d="M5.5 1.5 L10 7.5 H1 Z" fill="#6a6a6a" stroke="#6a6a6a" stroke-width="1" stroke-linejoin="round"/></svg>
<div class="r" style="left:1124px;top:473px;width:9px;height:23px;background:#707070;border-radius:4.5px;"></div>
<svg class="s" style="left:1123px;top:805px;" width="11" height="9" viewBox="0 0 11 9"><path d="M1 1.5 H10 L5.5 7.5 Z" fill="#6a6a6a" stroke="#6a6a6a" stroke-width="1" stroke-linejoin="round"/></svg>
<svg class="s" style="left:1123px;top:819px;" width="11" height="13" viewBox="0 0 11 13"><path d="M5.5 1 L10 6.7 L8.3 7.7 L10 11.7 H1 L2.7 7.7 L1 6.7 Z" fill="#6a6a6a" stroke="#6a6a6a" stroke-width="0.6" stroke-linejoin="round"/></svg>
<svg class="s" style="left:1123px;top:835px;" width="11" height="14" viewBox="0 0 11 14"><path d="M1 1.8 H10 L8.3 5.8 L10 6.8 L5.5 12.9 L1 6.8 L2.7 5.8 Z" fill="#6a6a6a" stroke="#6a6a6a" stroke-width="0.6" stroke-linejoin="round"/></svg>
<div class="t" style="left:205.80px;top:881.00px;font-size:13px;line-height:14.94px;color:#555555;letter-spacing:0.727px;">Click to add notes</div>
</body></html>
